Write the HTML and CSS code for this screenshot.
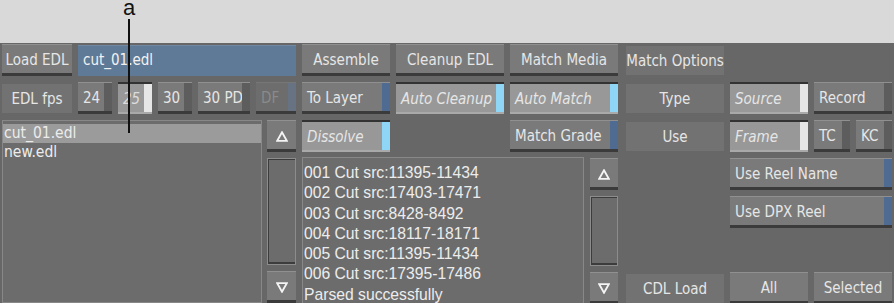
FILE: index.html
```html
<!DOCTYPE html>
<html>
<head>
<meta charset="utf-8">
<title>EDL</title>
<link rel="stylesheet" href="styles.css">
</head>
<body>
<div class="top"></div>
<div class="panel">
  <div class="left">
    <div class="row">
      <div class="btn center w70"><span class="t">Load EDL</span></div>
      <div class="field">cut_01.edl</div>
    </div>
    <div class="row">
      <div class="label w70">EDL fps</div>
      <div class="btn w34"><span class="t">24</span><span class="strip"></span></div>
      <div class="btn on w34"><span class="t dim">25</span><span class="strip white"></span></div>
      <div class="btn w34"><span class="t">30</span><span class="strip"></span></div>
      <div class="btn w52"><span class="t">30 PD</span><span class="strip"></span></div>
      <div class="btn off w40"><span class="t">DF</span><span class="strip slate"></span></div>
    </div>
    <div class="listrow">
      <div class="list">
        <div class="item sel">cut_01.edl</div>
        <div class="item">new.edl</div>
      </div>
      <div class="scroll w29">
        <div class="btn arrow"><svg width="12" height="11" viewBox="0 0 12 11"><polygon points="6,1.2 10.8,9.8 1.2,9.8" fill="none" stroke="#f4f4f4" stroke-width="1.8" stroke-linejoin="miter"/></svg></div>
        <div class="track"></div>
        <div class="btn arrow"><svg width="12" height="11" viewBox="0 0 12 11"><polygon points="1.2,1.2 10.8,1.2 6,9.8" fill="none" stroke="#f4f4f4" stroke-width="1.8" stroke-linejoin="miter"/></svg></div>
      </div>
    </div>
  </div>

  <div class="right">
    <div class="btn center a-asm"><span class="t">Assemble</span></div>
    <div class="btn center a-cln"><span class="t">Cleanup EDL</span></div>
    <div class="btn center a-mm"><span class="t">Match Media</span></div>
    <div class="label dcol a-mo">Match Options</div>

    <div class="btn a-tl"><span class="t">To Layer</span><span class="strip blue"></span></div>
    <div class="btn on a-ac"><span class="t">Auto Cleanup</span><span class="strip cyan"></span></div>
    <div class="btn on a-am"><span class="t">Auto Match</span><span class="strip cyan"></span></div>
    <div class="label dcol a-ty">Type</div>
    <div class="btn on a-src"><span class="t">Source</span><span class="strip white"></span></div>
    <div class="btn a-rec"><span class="t">Record</span><span class="strip"></span></div>

    <div class="btn on a-dis"><span class="t">Dissolve</span><span class="strip cyan"></span></div>
    <div class="btn a-mg"><span class="t">Match Grade</span><span class="strip blue"></span></div>
    <div class="label dcol a-use">Use</div>
    <div class="btn on a-frm"><span class="t">Frame</span><span class="strip white"></span></div>
    <div class="pair a-tk">
      <div class="btn"><span class="t">TC</span><span class="strip"></span></div>
      <div class="btn"><span class="t">KC</span><span class="strip"></span></div>
    </div>

    <div class="logwrap a-log">
      <div class="log">
        <div>001 Cut src:11395-11434</div>
        <div>002 Cut src:17403-17471</div>
        <div>003 Cut src:8428-8492</div>
        <div>004 Cut src:18117-18171</div>
        <div>005 Cut src:11395-11434</div>
        <div>006 Cut src:17395-17486</div>
        <div>Parsed successfully</div>
      </div>
      <div class="scroll w28">
        <div class="btn arrow"><svg width="12" height="11" viewBox="0 0 12 11"><polygon points="6,1.2 10.8,9.8 1.2,9.8" fill="none" stroke="#f4f4f4" stroke-width="1.8"/></svg></div>
        <div class="track"></div>
        <div class="btn arrow"><svg width="12" height="11" viewBox="0 0 12 11"><polygon points="1.2,1.2 10.8,1.2 6,9.8" fill="none" stroke="#f4f4f4" stroke-width="1.8"/></svg></div>
      </div>
    </div>

    <div class="btn a-urn"><span class="t">Use Reel Name</span><span class="strip blue"></span></div>
    <div class="btn a-udr"><span class="t">Use DPX Reel</span><span class="strip blue"></span></div>

    <div class="label dcol a-cdl">CDL Load</div>
    <div class="btn center a-all"><span class="t">All</span></div>
    <div class="btn center a-sel"><span class="t">Selected</span></div>
  </div>
</div>
<div class="callout">
  <span class="callout-letter">a</span>
  <span class="callout-line"></span>
</div>
</body>
</html>
```

FILE: styles.css
```css
* { box-sizing: border-box; }
html, body { margin: 0; padding: 0; }
body {
  width: 894px;
  height: 303px;
  overflow: hidden;
  position: relative;
  background: #d9d9d9;
  font-family: "DejaVu Sans Condensed", "DejaVu Sans", sans-serif;
  font-stretch: condensed;
  font-size: 15px;
  color: #e6e6e6;
}
.top { height: 43px; }
.panel {
  height: 260px;
  background: #676767;
  display: flex;
  gap: 6px;
  padding: 1px 0 0 2px;
}
.left {
  width: 294px;
  display: flex;
  flex-direction: column;
  gap: 6px;
}
.row { display: flex; gap: 6px; height: 32px; }
.listrow { display: flex; gap: 5px; flex: 1; }

.w70 { width: 70px; }
.w34 { width: 34px; }
.w52 { width: 52px; }
.w40 { width: 40px; }
.w29 { width: 29px; }
.w28 { width: 28px; }

.btn {
  display: flex;
  align-items: center;
  height: 32px;
  background: #7a7a7a;
  border-top: 1px solid #909090;
  border-bottom: 3px solid #3b3b3b;
  white-space: nowrap;
  overflow: hidden;
}
.btn .t {
  flex: 1;
  padding: 2px 0 0 5px;
  overflow: hidden;
}
.btn.center .t { text-align: center; padding-left: 0; }
.btn.on {
  background: #989898;
  border-top: 2px solid #333;
  border-bottom: 2px solid #a9a9a9;
  font-style: italic;
}
.btn.on .t { padding-top: 1px; }
.btn.off { background: #6d6d6d; border-top-color: #777; color: #8a8a8a; }
.t.dim { color: #dcdcdc; }
.strip { width: 8px; align-self: stretch; background: #5d5d5d; }
.strip.white { background: #e6e6e6; }
.strip.cyan { background: #8fd6f6; }
.strip.blue { background: #4f6b92; }
.strip.slate { background: #677283; }

.field {
  flex: 1;
  height: 31px;
  margin-top: 1px;
  background: #5f7a97;
  border-top: 1px solid #7088a2;
  color: #f2f2f2;
  padding: 5px 0 0 5px;
}
.label {
  margin-top: 2px;
  height: 29px;
  background: #727272;
  display: flex;
  align-items: center;
  justify-content: center;
  padding-top: 1px;
  white-space: nowrap;
}
.dcol { margin-left: 2px; }

.list {
  flex: 1;
  background: #6c6c6c;
  border: 1px solid #888;
  padding-top: 3px;
  font-size: 15.5px;
}
.item { height: 19px; line-height: 19px; padding-left: 1px; color: #ececec; }
.item.sel { background: #9b9b9b; }

.scroll { display: flex; flex-direction: column; gap: 6px; }
.arrow { justify-content: center; padding-top: 2px; }
.track {
  flex: 1;
  background: #6c6c6c;
  border: 1px solid #8c8c8c;
  box-shadow: inset 1px 1px 0 #3c3c3c, inset 0 -2px 0 #3c3c3c;
}

.right {
  width: 590px;
  display: grid;
  grid-template-columns: 88px 108px 108px 100px 78px 78px;
  grid-template-rows: repeat(7, 32px);
  gap: 6px;
  grid-template-areas:
    "asm cln mm  mo  .   .  "
    "tl  ac  am  ty  src rec"
    "dis .   mg  use frm tk "
    "log log log .   urn urn"
    "log log log .   udr udr"
    "log log log .   .   .  "
    "log log log cdl all sel";
}
.a-asm { grid-area: asm; }
.a-cln { grid-area: cln; }
.a-mm { grid-area: mm; }
.a-mo { grid-area: mo; }
.a-tl { grid-area: tl; }
.a-ac { grid-area: ac; }
.a-am { grid-area: am; }
.a-ty { grid-area: ty; }
.a-src { grid-area: src; }
.a-rec { grid-area: rec; }
.a-dis { grid-area: dis; }
.a-mg { grid-area: mg; }
.a-use { grid-area: use; }
.a-frm { grid-area: frm; }
.a-tk { grid-area: tk; }
.a-log { grid-area: log; }
.a-urn { grid-area: urn; }
.a-udr { grid-area: udr; }
.a-cdl { grid-area: cdl; }
.a-all { grid-area: all; }
.a-sel { grid-area: sel; }

.pair { display: flex; gap: 6px; }
.pair .btn { flex: 1; }

.logwrap { display: flex; gap: 6px; }
.log {
  flex: 1;
  margin-top: -1px;
  background: #6c6c6c;
  border: 1px solid #888;
  padding: 5px 0 0 1px;
  font-family: "Liberation Sans", Arial, sans-serif;
  font-stretch: normal;
  font-size: 15.7px;
  line-height: 20.3px;
  color: #ececec;
  white-space: nowrap;
}

.callout {
  position: absolute;
  left: 0;
  top: 0;
}
.callout-letter {
  position: absolute;
  left: 123px;
  top: 0;
  font-family: "Liberation Sans", Arial, sans-serif;
  font-size: 22px;
  line-height: 16px;
  color: #111;
}
.callout-line {
  position: absolute;
  left: 128px;
  top: 19px;
  width: 2px;
  height: 114px;
  background: #111;
}
```
